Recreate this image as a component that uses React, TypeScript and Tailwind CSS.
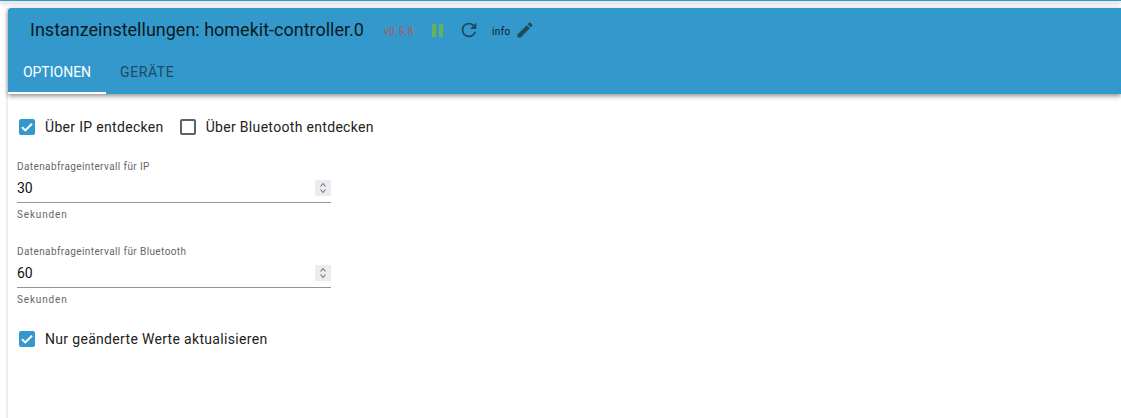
function CheckBox({ checked, label }: { checked: boolean; label: string }) {
	return (
		<label className="flex items-center">
			{checked ? (
				<span className="flex h-4 w-4 items-center justify-center rounded-[2px] bg-[#3399cc]">
					<svg viewBox="0 0 16 16" className="h-4 w-4">
						<path d="M3 8.2l3.3 3.2L13 4.8" fill="none" stroke="#fff" strokeWidth="2" />
					</svg>
				</span>
			) : (
				<span className="h-4 w-4 rounded-[2px] border-2 border-[#616161]" />
			)}
			<span className="ml-[10px] text-[14px] leading-4 tracking-[0.32px] text-[#222]">{label}</span>
		</label>
	);
}

function NumberField({ label, value }: { label: string; value: string }) {
	return (
		<div className="w-[314px]">
			<div className="text-[10px] leading-3 tracking-[0.4px] text-[#666]">{label}</div>
			<div className="mt-[4px] flex h-[26px] items-center justify-between border-b border-[#949494] pb-[3px]">
				<span className="text-[14px] text-[#111]">{value}</span>
				<span className="flex h-4 w-4 items-center justify-center bg-[#ebebf0]">
					<svg viewBox="0 0 16 16" className="h-4 w-4">
						<path d="M5.5 6.5L8 3.5l2.5 3M5.5 9.5L8 12.5l2.5-3" fill="none" stroke="#777" strokeWidth="1.1" />
					</svg>
				</span>
			</div>
			<div className="mt-[6px] text-[10px] leading-3 tracking-[0.85px] text-[#666]">Sekunden</div>
		</div>
	);
}

export default function App() {
	return (
		<div className="h-[418px] w-[1121px] overflow-hidden bg-white font-['Roboto',sans-serif]">
			<div className="h-px bg-[#3399cc] shadow-[0_2px_4px_rgba(0,0,0,0.5)]" />
			<div className="flex h-[417px] pt-[7px]">
				<div className="w-[8px] border-r-2 border-[#eeeeee]" />
				<div className="min-w-0 flex-1">
					<div className="h-[86px] rounded-tl-[3px] bg-[#3399cc] shadow-[0_2px_5px_rgba(0,0,0,0.45)]">
						<div className="flex h-[44px] items-center pl-[22px]">
							<span className="mb-[2px] text-[18px] text-[#0c1a22]">Instanzeinstellungen: homekit-controller.0</span>
							<span className="ml-[20px] mt-[3px] text-[10px] tracking-[0.5px] text-[#c0504d]">v0.5.8</span>
							<span className="ml-[18px] flex gap-[3px]">
								<span className="h-[13px] w-[4px] bg-[#66b355]" />
								<span className="h-[13px] w-[4px] bg-[#66b355]" />
							</span>
							<svg viewBox="0 0 24 24" className="ml-[15px] h-[22px] w-[22px]">
								<path
									fill="#1f4a60"
									d="M17.65 6.35A7.96 7.96 0 0 0 12 4a8 8 0 1 0 7.73 10h-2.08A6 6 0 1 1 12 6c1.66 0 3.14.69 4.22 1.78L13 11h7V4l-2.35 2.35z"
								/>
							</svg>
							<span className="ml-[12px] mt-[2px] text-[10px] tracking-[0.4px] text-[#0c1a22]">info</span>
							<svg viewBox="0 0 24 24" className="ml-[4px] h-5 w-5">
								<path
									fill="#1f4a60"
									d="M3 17.25V21h3.75L17.81 9.94l-3.75-3.75L3 17.25zM20.71 7.04a1 1 0 0 0 0-1.41l-2.34-2.34a1 1 0 0 0-1.41 0l-1.83 1.83 3.75 3.75 1.83-1.83z"
								/>
							</svg>
						</div>
						<div className="flex h-[42px] text-[14px]">
							<div className="flex w-[98px] items-center justify-center border-b-2 border-white pt-[1px] text-white">OPTIONEN</div>
							<div className="flex items-center pb-[2px] pl-[14px] pt-[1px] tracking-[0.6px] text-[#1f4a60]">GERÄTE</div>
						</div>
					</div>
					<div className="pl-[11px] pt-[25px]">
						<div className="flex gap-[16px]">
							<CheckBox checked label="Über IP entdecken" />
							<CheckBox checked={false} label="Über Bluetooth entdecken" />
						</div>
						<div className="mt-[26px] -ml-[2px] flex flex-col gap-[25px]">
							<NumberField label="Datenabfrageintervall für IP" value="30" />
							<NumberField label="Datenabfrageintervall für Bluetooth" value="60" />
						</div>
						<div className="mt-[25px]">
							<CheckBox checked label="Nur geänderte Werte aktualisieren" />
						</div>
					</div>
				</div>
			</div>
		</div>
	);
}
